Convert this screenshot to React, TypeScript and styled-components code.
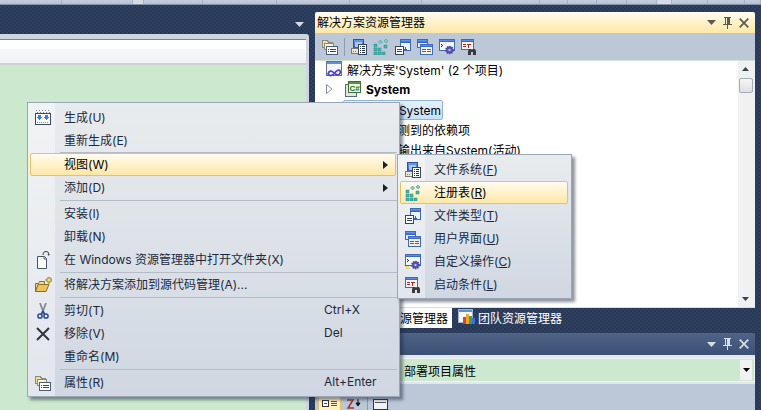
import React from 'react';
import styled, { createGlobalStyle } from 'styled-components';

const GlobalStyle = createGlobalStyle`
  html, body {
    margin: 0;
    padding: 0;
    width: 761px;
    height: 410px;
    overflow: hidden;
  }
  body {
    font-family: Inter, "Noto Sans CJK SC", sans-serif;
    font-size: 12px;
  }
`;

const Page = styled.div`
  position: relative;
  width: 761px;
  height: 410px;
  overflow: hidden;
  background-color: #293955;
  background-image: repeating-conic-gradient(#2f4162 0 25%, #293955 0 50%);
  background-size: 4px 4px;
`;

const TopStrip = styled.div`
  display: flex;
  height: 4px;
  background: #bcc7d8;
  border-bottom: 1px solid #8593ab;
`;

const StripCell = styled.div<{ $w: number; $light?: boolean }>`
  width: ${(p) => p.$w}px;
  flex: none;
  box-sizing: border-box;
  border-right: 1px solid #a5b1c5;
  background: ${(p) => (p.$light ? '#d5dce8' : 'linear-gradient(#c5cedd, #b6c1d4)')};
`;

const Main = styled.div`
  display: flex;
  height: 405px;
`;

const LeftColumn = styled.div`
  width: 309px;
  margin-right: 6px;
  display: flex;
  flex-direction: column;
`;

const DocBar = styled.div`
  height: 29px;
  display: flex;
  align-items: flex-end;
  justify-content: flex-end;
  padding: 0 5px 7px 0;
  box-sizing: border-box;
`;

const DocPane = styled.div`
  flex: 1;
  display: flex;
  flex-direction: column;
  background: #cfd6e2;
  border-radius: 0 3px 0 0;
  padding: 5px 3px 0 0;
`;

const DocHeader = styled.div`
  height: 26px;
  flex: none;
  box-sizing: border-box;
  border-top: 1px solid #7d8a78;
  border-bottom: 2px solid #cdd0d4;
  background: linear-gradient(#fff 0, #fff 36%, #f6f7f9 40%, #f1f2f5 100%);
`;

const DocBody = styled.div`
  flex: 1;
  background: #cce8cf;
`;

const RightColumn = styled.div`
  width: 440px;
  padding-top: 7px;
  display: flex;
  flex-direction: column;
`;

const ToolTitle = styled.div<{ $active?: boolean }>`
  flex: none;
  height: ${(p) => (p.$active ? 21 : 22)}px;
  display: flex;
  align-items: center;
  gap: 7px;
  padding: 0 6px 0 2px;
  border-radius: 2px 2px 0 0;
  background: ${(p) =>
    p.$active
      ? 'linear-gradient(#fffcf2, #fff3cd 45%, #ffe8a6)'
      : 'linear-gradient(#4f6386, #3c5076)'};
  color: #000;
`;

const TitleText = styled.span`
  flex: 1;
  line-height: 21px;
`;

const Toolbar = styled.div`
  flex: none;
  height: 27px;
  background: #bcc7d8;
  display: flex;
  align-items: center;
  padding-left: 7px;
  gap: 6px;
`;

const ToolDivider = styled.div`
  width: 1px;
  height: 18px;
  background: #8e9bb0;
`;

const TreeArea = styled.div`
  flex: none;
  height: 248px;
  display: flex;
  background: #fff;
  border-top: 1px solid #cfe5d3;
  border-bottom: 1px solid #cfe5d3;
  box-sizing: border-box;
  overflow: hidden;
`;

const TreeList = styled.div`
  flex: 1;
  margin-top: -2px;
  color: #000;
`;

const TreeRow = styled.div<{ $indent: number }>`
  height: 20px;
  display: flex;
  align-items: center;
  gap: 4px;
  padding-left: ${(p) => p.$indent}px;
`;

const Expander = styled.span`
  width: 15px;
  flex: none;
  display: flex;
`;

const BoldName = styled.span`
  font-weight: 700;
  margin-left: 1px;
`;

const SelectedItem = styled.div`
  height: 18px;
  width: 98px;
  margin: 1px 0 -1px 28px;
  border: 1px solid #8fb4de;
  border-radius: 2px;
  background: linear-gradient(#e6f0fd, #c8dffc);
  display: flex;
  align-items: center;
  justify-content: flex-end;
`;

const SelectedLabel = styled.span`
  padding-right: 1px;
`;

const ScrollBar = styled.div`
  width: 17px;
  flex: none;
  background: #f0f1f3;
  display: flex;
  flex-direction: column;
  align-items: center;
  padding: 6px 2px 6px 0;
  box-sizing: border-box;
`;

const ScrollThumb = styled.div`
  width: 14px;
  height: 15px;
  margin-top: 7px;
  box-sizing: border-box;
  border: 1px solid #a5acb5;
  border-radius: 2px;
  background: linear-gradient(#f6f6f6, #dcdfe3);
`;

const ScrollFill = styled.div`
  flex: 1;
`;

const TabRow = styled.div`
  flex: none;
  height: 20px;
  display: flex;
`;

const Tab = styled.div<{ $active?: boolean }>`
  display: flex;
  align-items: center;
  gap: 3px;
  height: 100%;
  padding: 0 0 2px 5px;
  background: ${(p) => (p.$active ? '#fff' : 'transparent')};
  color: ${(p) => (p.$active ? '#000' : '#fff')};
  width: ${(p) => (p.$active ? '137px' : 'auto')};
  margin-right: ${(p) => (p.$active ? '1px' : '0')};
  box-sizing: border-box;
`;

const LowerPanel = styled.div`
  margin-top: 5px;
  flex: 1;
  display: flex;
  flex-direction: column;
`;

const ComboStrip = styled.div`
  flex: none;
  height: 29px;
  box-sizing: border-box;
  padding: 3px 0 2px 0;
  background: #e3e6ec;
`;

const Combo = styled.div`
  height: 24px;
  box-sizing: border-box;
  border: 1px solid #f0f4f0;
  background: #cce8cf;
  display: flex;
  align-items: center;
  padding-left: 88px;
  color: #000;
`;

const ComboText = styled.span`
  flex: 1;
`;

const ComboButton = styled.span`
  width: 12px;
  height: 20px;
  margin-right: 2px;
  background: #f1f2f4;
  display: flex;
  align-items: center;
  justify-content: center;
`;

const PropertyBar = styled.div`
  flex: 1;
  background: #bcc7d8;
  display: flex;
  align-items: flex-start;
  padding: 12px 0 0 3px;
  gap: 5px;
`;

const SortButton = styled.div`
  width: 23px;
  height: 20px;
  box-sizing: border-box;
  border: 1px solid #e5c365;
  background: #fff0c2;
  display: flex;
  justify-content: center;
  padding-top: 2px;
`;

const PlainButton = styled.div`
  width: 16px;
  padding-top: 3px;
`;

const ContextMenu = styled.div<{ $left: number; $top: number; $width: number; $gutter: number }>`
  position: absolute;
  left: ${(p) => p.$left}px;
  top: ${(p) => p.$top}px;
  width: ${(p) => p.$width}px;
  box-sizing: border-box;
  padding: 3px 0 2px;
  border: 1px solid #9ba7b7;
  color: #1b293e;
  box-shadow: 3px 3px 3px rgba(30, 40, 60, 0.5);
  background:
    linear-gradient(to right, rgba(255, 255, 255, 0.38) 0, rgba(255, 255, 255, 0.38) ${(p) => p.$gutter}px, transparent ${(p) => p.$gutter}px),
    linear-gradient(#e9ecee, #d0d7e2);
`;

const MenuRow = styled.div<{ $hot?: boolean; $gutter: number; $label: number }>`
  height: 23px;
  margin: 0 3px 0 2px;
  box-sizing: border-box;
  display: grid;
  grid-template-columns: ${(p) => p.$gutter}px ${(p) => p.$label}px 1fr;
  align-items: center;
  border-radius: 2px;
  border: 1px solid ${(p) => (p.$hot ? '#e5c365' : 'transparent')};
  background: ${(p) => (p.$hot ? 'linear-gradient(#fffbef, #fff3cf 45%, #ffe8a6)' : 'transparent')};
  color: ${(p) => (p.$hot ? '#000' : 'inherit')};
`;

const MenuIcon = styled.span`
  display: flex;
  justify-content: center;
  align-items: center;
  height: 16px;
`;

const MenuLabel = styled.span`
  padding: 0 0 2px 9px;
  white-space: nowrap;
`;

const Shortcut = styled.span`
  white-space: nowrap;
  padding-bottom: 2px;
`;

const SubArrow = styled.span`
  display: flex;
  justify-content: flex-end;
  padding-right: 7px;
`;

const Mnemonic = styled.span`
  text-decoration: underline;
`;

const Separator = styled.div<{ $h: number }>`
  height: ${(p) => p.$h}px;
  margin-left: 32px;
  margin-right: 2px;
  display: flex;
  align-items: center;
  &::after {
    content: '';
    display: block;
    width: 100%;
    height: 1px;
    background: #b5bcc8;
  }
`;

/* ---------- icons ---------- */

const WindowBlue = 'url(#blueBar)';

function IconDefs() {
  return (
    <svg width="0" height="0" style={{ position: 'absolute' }}>
      <defs>
        <linearGradient id="blueBar" x1="0" y1="0" x2="0" y2="1">
          <stop offset="0" stopColor="#6f9df0" />
          <stop offset="1" stopColor="#2558c4" />
        </linearGradient>
      </defs>
    </svg>
  );
}

function FileSystemIcon() {
  return (
    <svg width="16" height="16" viewBox="0 0 16 16" shapeRendering="crispEdges">
      <rect x="2.5" y="0.5" width="10" height="9" fill={WindowBlue} stroke="#2a55a8" />
      <rect x="4" y="3" width="7" height="5" fill="#a9c6f5" />
      <rect x="0.5" y="9.5" width="7" height="5" fill="#efe7cf" stroke="#7d7c70" />
      <path d="M2 12h1v1H2zM4 12h1v1H4z" fill="#7d7c70" />
      <rect x="7.5" y="5.5" width="8" height="10" fill="#fff" stroke="#36465c" />
      <path d="M9 7h1v1H9zM11 7h3v1h-3zM9 9h1v1H9zM11 9h3v1h-3zM9 11h1v1H9zM11 11h3v1h-3zM9 13h1v1H9zM11 13h3v1h-3z" fill="#27364c" />
    </svg>
  );
}

function RegistryIcon() {
  const cells: React.ReactNode[] = [];
  for (let r = 0; r < 3; r++) {
    for (let c = 0; c < 3; c++) {
      if (r === 0 && c > 0) continue;
      if (r === 1 && c > 1) continue;
      cells.push(<rect key={`${r}${c}`} x={1 + c * 4} y={5 + r * 4} width="3" height="3" fill="#45b5a8" stroke="#2a8a88" strokeWidth="0.5" />);
    }
  }
  return (
    <svg width="16" height="16" viewBox="0 0 16 16">
      {cells}
      <path d="M7.500 1l2 2-2 2-2-2z" fill="#6fd2d8" stroke="#2f8ea0" strokeWidth="0.500" />
      <path d="M13 0l2 2-2 2-2-2z" fill="#6fd2d8" stroke="#2f8ea0" strokeWidth="0.500" />
      <rect x="11" y="6" width="3" height="3" fill="#45b5a8" stroke="#2a8a88" strokeWidth="0.5" />
    </svg>
  );
}

function FileTypesIcon() {
  return (
    <svg width="16" height="16" viewBox="0 0 16 16" shapeRendering="crispEdges">
      <rect x="5.5" y="0.5" width="10" height="11" fill="#eef3fb" stroke="#3f6bb5" />
      <rect x="6" y="1" width="9" height="3" fill={WindowBlue} />
      <rect x="0.5" y="7.5" width="8" height="8" fill="#fff" stroke="#36465c" />
      <path d="M2 10h5v1H2zM2 12h5v1H2z" fill="#36465c" />
      <path d="M9 10h1V8h1v2h1v1h-1v1h-1v-1H9z" fill="#2a63cf" />
    </svg>
  );
}

function UiIcon() {
  return (
    <svg width="16" height="16" viewBox="0 0 16 16" shapeRendering="crispEdges">
      <rect x="0.5" y="0.5" width="10" height="8" fill="#dfe9f8" stroke="#3f6bb5" />
      <rect x="1" y="1" width="9" height="3" fill={WindowBlue} />
      <rect x="3.5" y="5.5" width="12" height="10" fill="#f6f0dc" stroke="#3f6bb5" />
      <rect x="4" y="6" width="11" height="2" fill={WindowBlue} />
      <path d="M5 10h4v1H5zM10 10h4v1h-4zM5 12h4v1H5zM10 12h4v1h-4z" fill="#55657c" />
    </svg>
  );
}

function CustomActionIcon() {
  return (
    <svg width="16" height="16" viewBox="0 0 16 16">
      <g shapeRendering="crispEdges">
        <rect x="0.5" y="0.5" width="15" height="11" fill="#f4f7fc" stroke="#3f6bb5" />
        <rect x="1" y="1" width="14" height="2" fill={WindowBlue} />
        <path d="M2 5h1v1h1v1H3v1H2V7h1V6H2z" fill="#222" />
        <path d="M0 12h4v1H0zM1 14h4v1H1z" fill="#e6cd6c" />
      </g>
      <circle cx="10.500" cy="11" r="3.400" fill="#5a57b8" stroke="#45439a" strokeDasharray="1.400 0.800" strokeWidth="1.800" />
      <circle cx="10.500" cy="11" r="1.100" fill="#d9d8f0" />
    </svg>
  );
}

function LaunchIcon() {
  return (
    <svg width="16" height="16" viewBox="0 0 16 16">
      <g shapeRendering="crispEdges">
        <rect x="0.5" y="0.5" width="12" height="10" fill="#f5f6fa" stroke="#3f6bb5" />
        <rect x="1" y="1" width="11" height="2" fill={WindowBlue} />
        <path d="M2 5h3v1H2zM2 7h3v1H2zM6 5h4v1H8v3H7V6H6z" fill="#b0261f" />
      </g>
      <path d="M8 10h2v1h2v-1h2l1 2v4h-3v-3h-2v3H7v-4z" fill="#3a3a3e" />
    </svg>
  );
}

function PropertiesIcon() {
  return (
    <svg width="16" height="16" viewBox="0 0 16 16" shapeRendering="crispEdges">
      <path d="M0.5 1.500h5l1 2h4v5h-10z" fill="#f0dfa8" stroke="#8b8a78" />
      <rect x="2.5" y="4.5" width="9" height="6" fill="#f6f0dc" stroke="#8b8a78" />
      <rect x="4.5" y="7.5" width="11" height="8" fill="#fff" stroke="#4c5f7a" />
      <path d="M6 10h1v1H6zM8 10h6v1H8zM6 12h1v1H6zM8 12h6v1H8z" fill="#2f4668" />
    </svg>
  );
}

function BuildIcon() {
  return (
    <svg width="16" height="16" viewBox="0 0 16 16" shapeRendering="crispEdges">
      <path d="M1 0h1v1H1zM4 0h1v1H4zM7 0h1v1H7zM10 0h1v1h-1zM13 0h1v1h-1zM2 2h1v1H2zM5 2h1v1H5zM8 2h1v1H8zM11 2h1v1h-1zM14 2h1v1h-1z" fill="#7f8796" />
      <rect x="0.5" y="3.5" width="15" height="11" fill="#fdfdfe" stroke="#3a4a68" />
      <path d="M3 5h3v2h1L4.500 10 2 7h1zM10 5h3v2h1l-2.500 3L9 7h1z" fill="#3f7be8" />
      <path d="M2 12h1v1H2zM4 12h1v1H4zM6 12h1v1H6zM8 12h1v1H8zM10 12h1v1h-1zM12 12h1v1h-1z" fill="#7f8796" />
    </svg>
  );
}

function OpenDocIcon() {
  return (
    <svg width="16" height="18" viewBox="0 0 16 18">
      <path d="M2.500 5.500h7l2 2v10h-9z" fill="#fbfcfe" stroke="#4a5568" />
      <path d="M9 6v2h2" fill="none" stroke="#4a5568" />
      <path d="M8 4c0-2 1-3.500 3-3.500s3 1.500 2.500 3.500" fill="none" stroke="#4a5568" strokeWidth="1.100" />
      <path d="M12.500 3l1 2 1.500-2z" fill="#4a5568" />
    </svg>
  );
}

function AddFolderIcon() {
  return (
    <svg width="17" height="16" viewBox="0 0 17 16">
      <path d="M0.500 6.500h3l1-2h5v3h-6l-3 7z" fill="#f5d98a" stroke="#8a6d2d" />
      <path d="M0.500 14.500l2.500-7h11l-3 7z" fill="#eec35a" stroke="#8a6d2d" />
      <path d="M11 2h2V0h2v2h2v2h-2v2h-2V4h-2z" fill="#f7e06a" stroke="#776b28" strokeWidth="0.700" />
    </svg>
  );
}

function ScissorsIcon() {
  return (
    <svg width="16" height="16" viewBox="0 0 16 16">
      <path d="M5 0l3 8M11 0L8 8" stroke="#7d8696" strokeWidth="1.700" fill="none" />
      <path d="M8 8L6 12M8 8l2 4" stroke="#2d4a9a" strokeWidth="1.700" fill="none" />
      <circle cx="5" cy="13" r="2.100" fill="none" stroke="#2d4a9a" strokeWidth="1.500" />
      <circle cx="11" cy="13" r="2.100" fill="none" stroke="#2d4a9a" strokeWidth="1.500" />
    </svg>
  );
}

function DeleteIcon() {
  return (
    <svg width="14" height="14" viewBox="0 0 14 14">
      <path d="M1 1l12 12M13 1L1 13" stroke="#30343c" strokeWidth="2" />
    </svg>
  );
}

function SolutionIcon() {
  return (
    <svg width="17" height="17" viewBox="0 0 17 17">
      <g shapeRendering="crispEdges">
        <rect x="0.500" y="0.500" width="15" height="14" fill="#f2f4f9" stroke="#6a7488" />
        <rect x="1" y="1" width="14" height="2" fill="#5f8fdc" />
      </g>
      <path d="M2 13c1-3.500 3.500-3.500 5.500-1.500s4 3.500 6 1.500 .5-4.500-2-3.500-3 3.500-5 4.500-3.500 .5-4.500-1z" fill="none" stroke="#4f44c8" strokeWidth="1.700" />
    </svg>
  );
}

function CsharpIcon() {
  return (
    <svg width="16" height="16" viewBox="0 0 16 16">
      <g shapeRendering="crispEdges">
        <rect x="0.500" y="3.500" width="11" height="12" fill="#dfe7ee" stroke="#5c6a6a" />
        <rect x="3.500" y="0.500" width="12" height="11" fill="#eef8dc" stroke="#3f6f3c" />
        <rect x="4" y="1" width="11" height="1.500" fill="#4f9b3b" />
      </g>
      <text x="4.500" y="9.500" fontFamily="Liberation Sans, sans-serif" fontSize="8" fontWeight="700" fill="#1f6d28">C#</text>
    </svg>
  );
}

function TeamIcon() {
  return (
    <svg width="17" height="16" viewBox="0 0 17 16" shapeRendering="crispEdges">
      <rect x="0.500" y="0.500" width="14" height="13" fill="#f5f8fd" stroke="#9db3d8" />
      <rect x="1" y="1" width="13" height="2" fill="#5f8fdc" />
      <rect x="5" y="8" width="2.500" height="7" fill="#d8442c" />
      <rect x="8" y="5" width="2.500" height="10" fill="#e9a92c" />
      <rect x="11" y="7" width="2.500" height="8" fill="#4aa03f" />
      <rect x="14" y="9" width="2.500" height="6" fill="#3f6fd8" />
    </svg>
  );
}

function Triangle({ color, w = 9, up }: { color: string; w?: number; up?: boolean }) {
  const d = up ? 'M0 5h9L4.500 0z' : 'M0 0h9L4.500 5z';
  return (
    <svg width={w} height={(w * 5) / 9} viewBox="0 0 9 5">
      <path d={d} fill={color} />
    </svg>
  );
}

function Pin({ color }: { color: string }) {
  return (
    <svg width="9" height="12" viewBox="0 0 9 12" shapeRendering="crispEdges">
      <path d="M1 0h7v1H7v6h2v1H5v4H4V8H0V7h2V1H1zM3 1v6h1V1z" fill={color} />
    </svg>
  );
}

function CloseX({ color }: { color: string }) {
  return (
    <svg width="10" height="10" viewBox="0 0 10 10">
      <path d="M0.700 0.700l8.600 8.600M9.300 0.700L0.700 9.300" stroke={color} strokeWidth="1.700" />
    </svg>
  );
}

function CaretRight() {
  return (
    <svg width="5" height="8" viewBox="0 0 5 8">
      <path d="M0 0l5 4-5 4z" fill="#1b1f28" />
    </svg>
  );
}

function TitleButtons({ color }: { color: string }) {
  return (
    <>
      <Triangle color={color} />
      <Pin color={color} />
      <CloseX color={color} />
    </>
  );
}

/* ---------- data ---------- */

type MainItem =
  | { sep: number }
  | { label: string; icon?: React.ReactNode; shortcut?: string; sub?: boolean; hot?: boolean };

const mainItems: MainItem[] = [
  { label: '生成(U)', icon: <BuildIcon /> },
  { label: '重新生成(E)' },
  { sep: 1 },
  { label: '视图(W)', sub: true, hot: true },
  { label: '添加(D)', sub: true },
  { sep: 3 },
  { label: '安装(I)' },
  { label: '卸载(N)' },
  { label: '在 Windows 资源管理器中打开文件夹(X)', icon: <OpenDocIcon /> },
  { sep: 2 },
  { label: '将解决方案添加到源代码管理(A)...', icon: <AddFolderIcon /> },
  { sep: 3 },
  { label: '剪切(T)', icon: <ScissorsIcon />, shortcut: 'Ctrl+X' },
  { label: '移除(V)', icon: <DeleteIcon />, shortcut: 'Del' },
  { label: '重命名(M)' },
  { sep: 3 },
  { label: '属性(R)', icon: <PropertiesIcon />, shortcut: 'Alt+Enter' },
];

const subItems = [
  { label: '文件系统', key: 'F', icon: <FileSystemIcon /> },
  { label: '注册表', key: 'R', icon: <RegistryIcon />, hot: true },
  { label: '文件类型', key: 'T', icon: <FileTypesIcon /> },
  { label: '用户界面', key: 'U', icon: <UiIcon /> },
  { label: '自定义操作', key: 'C', icon: <CustomActionIcon /> },
  { label: '启动条件', key: 'L', icon: <LaunchIcon /> },
];

const stripCells = [
  { w: 62 }, { w: 71 }, { w: 11, light: true }, { w: 59 }, { w: 74 }, { w: 73 },
  { w: 72 }, { w: 118 }, { w: 28 }, { w: 29 }, { w: 30 }, { w: 30 }, { w: 15, light: true },
  { w: 36 }, { w: 37 }, { w: 16 },
];

function App() {
  return (
    <Page>
      <GlobalStyle />
      <IconDefs />
      <TopStrip>
        {stripCells.map((c, i) => (
          <StripCell key={i} $w={c.w} $light={c.light} />
        ))}
      </TopStrip>
      <Main>
        <LeftColumn>
          <DocBar>
            <Triangle color="#d5dbe6" />
          </DocBar>
          <DocPane>
            <DocHeader />
            <DocBody />
          </DocPane>
        </LeftColumn>
        <RightColumn>
          <ToolTitle $active>
            <TitleText>解决方案资源管理器</TitleText>
            <TitleButtons color="#5c5a4c" />
          </ToolTitle>
          <Toolbar>
            <PropertiesIcon />
            <ToolDivider />
            <FileSystemIcon />
            <RegistryIcon />
            <FileTypesIcon />
            <UiIcon />
            <CustomActionIcon />
            <LaunchIcon />
          </Toolbar>
          <TreeArea>
            <TreeList>
              <TreeRow $indent={11}>
                <SolutionIcon />
                <span>解决方案'System' (2 个项目)</span>
              </TreeRow>
              <TreeRow $indent={11}>
                <Expander>
                  <svg width="7" height="10" viewBox="0 0 7 10">
                    <path d="M0.500 0.500l5.500 4.500-5.500 4.500z" fill="#fff" stroke="#8a8f96" />
                  </svg>
                </Expander>
                <CsharpIcon />
                <BoldName>System</BoldName>
              </TreeRow>
              <SelectedItem>
                <SelectedLabel>System</SelectedLabel>
              </SelectedItem>
              <TreeRow $indent={71}>检测到的依赖项</TreeRow>
              <TreeRow $indent={71}>主输出来自System(活动)</TreeRow>
            </TreeList>
            <ScrollBar>
              <Triangle color="#3a3f48" w={7} up />
              <ScrollThumb />
              <ScrollFill />
              <Triangle color="#3a3f48" w={7} />
            </ScrollBar>
          </TreeArea>
          <TabRow>
            <Tab $active>
              <SolutionIcon />
              解决方案资源管理器
            </Tab>
            <Tab>
              <TeamIcon />
              团队资源管理器
            </Tab>
          </TabRow>
          <LowerPanel>
            <ToolTitle>
              <TitleText />
              <TitleButtons color="#d8dee8" />
            </ToolTitle>
            <ComboStrip>
              <Combo>
                <ComboText>部署项目属性</ComboText>
                <ComboButton>
                  <Triangle color="#000" w={7} />
                </ComboButton>
              </Combo>
            </ComboStrip>
            <PropertyBar>
              <SortButton>
                <svg width="16" height="12" viewBox="0 0 16 12" shapeRendering="crispEdges">
                  <rect x="0.500" y="1.500" width="6" height="6" fill="#fff" stroke="#333" />
                  <path d="M2 4h3v1H2z" fill="#2a55c0" />
                  <path d="M9 2h6v1H9zM9 4h6v1H9zM9 6h6v1H9z" fill="#555" />
                </svg>
              </SortButton>
              <PlainButton>
                <svg width="16" height="12" viewBox="0 0 16 12">
                  <path d="M1 1h6L2 9h6" fill="none" stroke="#a3352a" strokeWidth="1.500" />
                  <path d="M12 0v5M10 4h4l-2 3z" stroke="#111" fill="#111" />
                </svg>
              </PlainButton>
              <ToolDivider />
              <PlainButton>
                <svg width="16" height="12" viewBox="0 0 16 12" shapeRendering="crispEdges">
                  <rect x="0.500" y="0.500" width="14" height="10" fill="#eef1f6" stroke="#333" />
                  <path d="M2 3h11v1H2z" fill="#555" />
                </svg>
              </PlainButton>
            </PropertyBar>
          </LowerPanel>
        </RightColumn>
      </Main>

      <ContextMenu $left={27} $top={102} $width={373} $gutter={27}>
        {mainItems.map((item, i) =>
          'sep' in item ? (
            <Separator key={i} $h={item.sep} />
          ) : (
            <MenuRow key={i} $hot={item.hot} $gutter={24} $label={269}>
              <MenuIcon>{item.icon}</MenuIcon>
              <MenuLabel>{item.label}</MenuLabel>
              {item.sub ? (
                <SubArrow>
                  <CaretRight />
                </SubArrow>
              ) : (
                <Shortcut>{item.shortcut}</Shortcut>
              )}
            </MenuRow>
          ),
        )}
      </ContextMenu>

      <ContextMenu $left={397} $top={154} $width={175} $gutter={27}>
        {subItems.map((item) => (
          <MenuRow key={item.key} $hot={item.hot} $gutter={24} $label={140}>
            <MenuIcon>{item.icon}</MenuIcon>
            <MenuLabel>
              {item.label}(<Mnemonic>{item.key}</Mnemonic>)
            </MenuLabel>
            <span />
          </MenuRow>
        ))}
      </ContextMenu>
    </Page>
  );
}

export default App;
